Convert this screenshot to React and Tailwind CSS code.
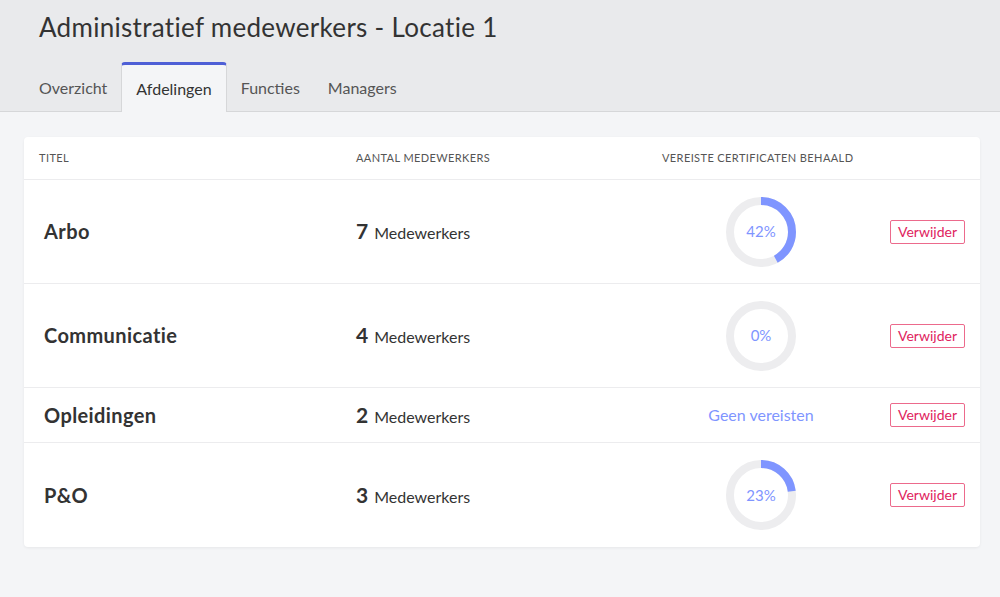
import React from "react";

const rows = [
  { title: "Arbo", count: 7, pct: 42, h: "h-[104px]" },
  { title: "Communicatie", count: 4, pct: 0, h: "h-[104px]" },
  { title: "Opleidingen", count: 2, pct: null, h: "h-[55px]" },
  { title: "P&O", count: 3, pct: 23, h: "h-[104px]" },
];

function Donut({ pct }) {
  const r = 31;
  const c = 2 * Math.PI * r;
  return (
    <div className="relative w-[72px] h-[72px]">
      <svg width="72" height="72" viewBox="0 0 72 72">
        <circle cx="36" cy="36" r={r} fill="none" stroke="#ededef" strokeWidth="8" />
        {pct > 0 && (
          <circle
            cx="36"
            cy="36"
            r={r}
            fill="none"
            stroke="#7f95ff"
            strokeWidth="8"
            strokeDasharray={`${(c * pct) / 100} ${c}`}
            transform="rotate(-90 36 36)"
          />
        )}
      </svg>
      <div className="absolute inset-0 flex items-center justify-center text-[15px] text-[#7f95ff]">
        {pct}%
      </div>
    </div>
  );
}

export default function App() {
  return (
    <div className="min-h-[597px] bg-[#f4f5f7] font-['Lato','Open_Sans',sans-serif] text-[#333]">
      <div className="bg-[#e9eaec] border-b border-[#d6d7d9]">
        <div className="pl-[39px] pt-[10px] h-[62px]">
          <h1 className="text-[26px] leading-[34px] tracking-[0.3px] text-[#333] font-normal">
            Administratief medewerkers - Locatie 1
          </h1>
        </div>
        <div className="flex h-[49px] pl-[25px]">
          {["Overzicht", "Afdelingen", "Functies", "Managers"].map((t) => (
            <div
              key={t}
              className={
                t === "Afdelingen"
                  ? "relative -mb-px px-[14px] flex items-center text-[16px] text-[#333] bg-[#f4f5f7] border-t-[3px] border-t-[#4e5fd6] border-x border-x-[#d6d7d9] rounded-t-[4px]"
                  : "px-[14px] flex items-center text-[16px] text-[#555] pt-[3px]"
              }
            >
              {t}
            </div>
          ))}
        </div>
      </div>
      <div className="pl-[24px] pr-[20px] pt-[25px] pb-[50px]">
        <div className="bg-white rounded-[4px] shadow-[0_1px_3px_rgba(0,0,0,0.06)]">
          <div className="grid grid-cols-[317px_306px_198px_1fr] px-[15px] h-[43px] items-center border-b border-[#ececee] text-[11px] text-[#555] uppercase tracking-[0.4px]">
            <div>Titel</div>
            <div>Aantal medewerkers</div>
            <div>Vereiste certificaten behaald</div>
            <div></div>
          </div>
          {rows.map((r, i) => (
            <div
              key={r.title}
              className={`grid grid-cols-[317px_306px_198px_1fr] px-[15px] items-center ${r.h} ${
                i < rows.length - 1 ? "border-b border-[#ececee]" : ""
              }`}
            >
              <div className="pl-[5px] text-[20px] font-bold text-[#333] tracking-[0.4px] -mt-[1px]">{r.title}</div>
              <div className="flex items-baseline gap-[6px] -mt-[1px]">
                <span className="text-[21px] font-bold text-[#333]">{r.count}</span>
                <span className="text-[16px] text-[#333]">Medewerkers</span>
              </div>
              <div className="flex justify-center">
                {r.pct === null ? (
                  <span className="text-[16px] text-[#7f95ff]">Geen vereisten</span>
                ) : (
                  <Donut pct={r.pct} />
                )}
              </div>
              <div className="flex justify-end">
                <button className="h-[24px] px-[7px] border border-[#ec6a8c] rounded-[2px] text-[14px] text-[#e0245e] leading-none bg-white">
                  Verwijder
                </button>
              </div>
            </div>
          ))}
        </div>
      </div>
    </div>
  );
}
